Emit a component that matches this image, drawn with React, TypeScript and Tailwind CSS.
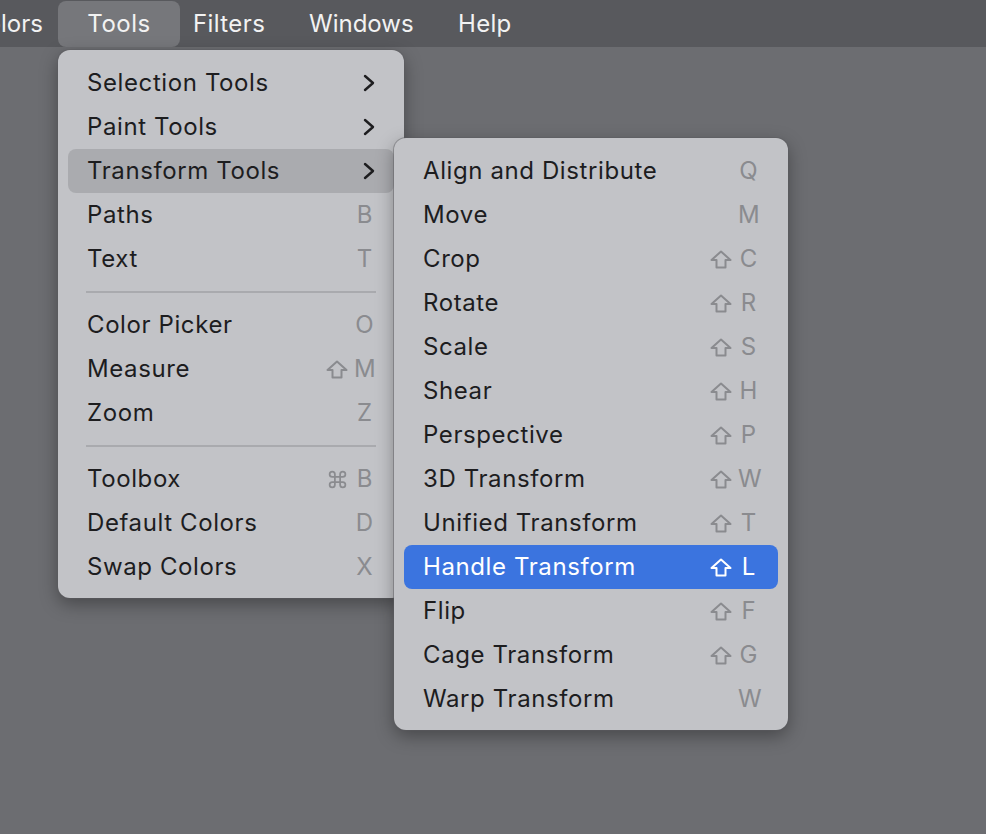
import { Command } from "lucide-react";

type Item =
  | { kind: "sep" }
  | { kind: "item"; label: string; key?: string; mod?: "shift" | "cmd"; sub?: boolean; active?: "gray" | "blue" };

const toolsMenu: Item[] = [
  { kind: "item", label: "Selection Tools", sub: true },
  { kind: "item", label: "Paint Tools", sub: true },
  { kind: "item", label: "Transform Tools", sub: true, active: "gray" },
  { kind: "item", label: "Paths", key: "B" },
  { kind: "item", label: "Text", key: "T" },
  { kind: "sep" },
  { kind: "item", label: "Color Picker", key: "O" },
  { kind: "item", label: "Measure", key: "M", mod: "shift" },
  { kind: "item", label: "Zoom", key: "Z" },
  { kind: "sep" },
  { kind: "item", label: "Toolbox", key: "B", mod: "cmd" },
  { kind: "item", label: "Default Colors", key: "D" },
  { kind: "item", label: "Swap Colors", key: "X" },
];

const transformMenu: Item[] = [
  { kind: "item", label: "Align and Distribute", key: "Q" },
  { kind: "item", label: "Move", key: "M" },
  { kind: "item", label: "Crop", key: "C", mod: "shift" },
  { kind: "item", label: "Rotate", key: "R", mod: "shift" },
  { kind: "item", label: "Scale", key: "S", mod: "shift" },
  { kind: "item", label: "Shear", key: "H", mod: "shift" },
  { kind: "item", label: "Perspective", key: "P", mod: "shift" },
  { kind: "item", label: "3D Transform", key: "W", mod: "shift" },
  { kind: "item", label: "Unified Transform", key: "T", mod: "shift" },
  { kind: "item", label: "Handle Transform", key: "L", mod: "shift", active: "blue" },
  { kind: "item", label: "Flip", key: "F", mod: "shift" },
  { kind: "item", label: "Cage Transform", key: "G", mod: "shift" },
  { kind: "item", label: "Warp Transform", key: "W" },
];

function ShiftGlyph() {
  return (
    <svg width="22" height="19" viewBox="0 0 22 19" fill="none">
      <path
        d="M11 1.5 L20.5 10 L15.5 10 L15.5 17.5 L6.5 17.5 L6.5 10 L1.5 10 Z"
        stroke="currentColor"
        strokeWidth="2"
        strokeLinejoin="round"
      />
    </svg>
  );
}

function Chevron() {
  return (
    <svg width="12" height="18" viewBox="0 0 12 18" fill="none">
      <path d="M2 2 L10 9 L2 16" stroke="currentColor" strokeWidth="2.4" strokeLinecap="round" strokeLinejoin="round" />
    </svg>
  );
}

function MenuRow({ item }: { item: Extract<Item, { kind: "item" }> }) {
  const blue = item.active === "blue";
  const gray = item.active === "gray";
  return (
    <div
      className={`mx-[10px] flex h-[44px] items-center rounded-[8px] px-[19px] ${
        blue ? "bg-[#3b74df] text-white" : gray ? "bg-[#aaabaf] text-[#1d1d1f]" : "text-[#1d1d1f]"
      }`}
    >
      <span className="flex-1 whitespace-nowrap tracking-[0.6px]">{item.label}</span>
      {item.sub && (
        <span className="text-[#1d1d1f]">
          <Chevron />
        </span>
      )}
      {item.key && (
        <span className={`flex items-center gap-[6px] ${blue ? "text-white" : "text-[#8a8b8f]"}`}>
          {item.mod === "shift" && <ShiftGlyph />}
          {item.mod === "cmd" && <Command size={21} strokeWidth={2} />}
          <span className="w-[21px] text-center">{item.key}</span>
        </span>
      )}
    </div>
  );
}

function Menu({ items, className }: { items: Item[]; className: string }) {
  return (
    <div
      className={`absolute rounded-[12px] bg-[#c2c3c7] py-[11px] text-[24px] shadow-[0_0_0_1px_rgba(90,91,95,0.45),0_6px_18px_rgba(0,0,0,0.35)] ${className}`}
    >
      {items.map((it, i) =>
        it.kind === "sep" ? (
          <div key={i} className="flex h-[22px] items-center px-[28px]">
            <div className="h-[2px] w-full bg-[#a9aaae]" />
          </div>
        ) : (
          <MenuRow key={i} item={it} />
        )
      )}
    </div>
  );
}

export default function App() {
  return (
    <div
      className="relative h-[834px] w-[986px] overflow-hidden bg-[#6c6d71]"
      style={{ fontFamily: "Inter, 'Liberation Sans', sans-serif" }}
    >
      <div className="flex h-[47px] items-center bg-[#58595d] text-[24px] text-[#f2f2f2]">
        <span className="-ml-[31px] w-[89px]">Colors</span>
        <span className="flex h-[46px] w-[122px] items-center justify-center rounded-[8px] bg-[#76777b] tracking-[0.5px]">
          Tools
        </span>
        <span className="w-[116px] pl-[13px] tracking-[0.4px]">Filters</span>
        <span className="w-[149px] pl-[13px]">Windows</span>
        <span className="pl-[13px] tracking-[0.3px]">Help</span>
      </div>

      <Menu items={toolsMenu} className="left-[58px] top-[50px] w-[346px] h-[548px]" />
      <Menu items={transformMenu} className="left-[394px] top-[138px] w-[394px] h-[592px]" />
    </div>
  );
}
